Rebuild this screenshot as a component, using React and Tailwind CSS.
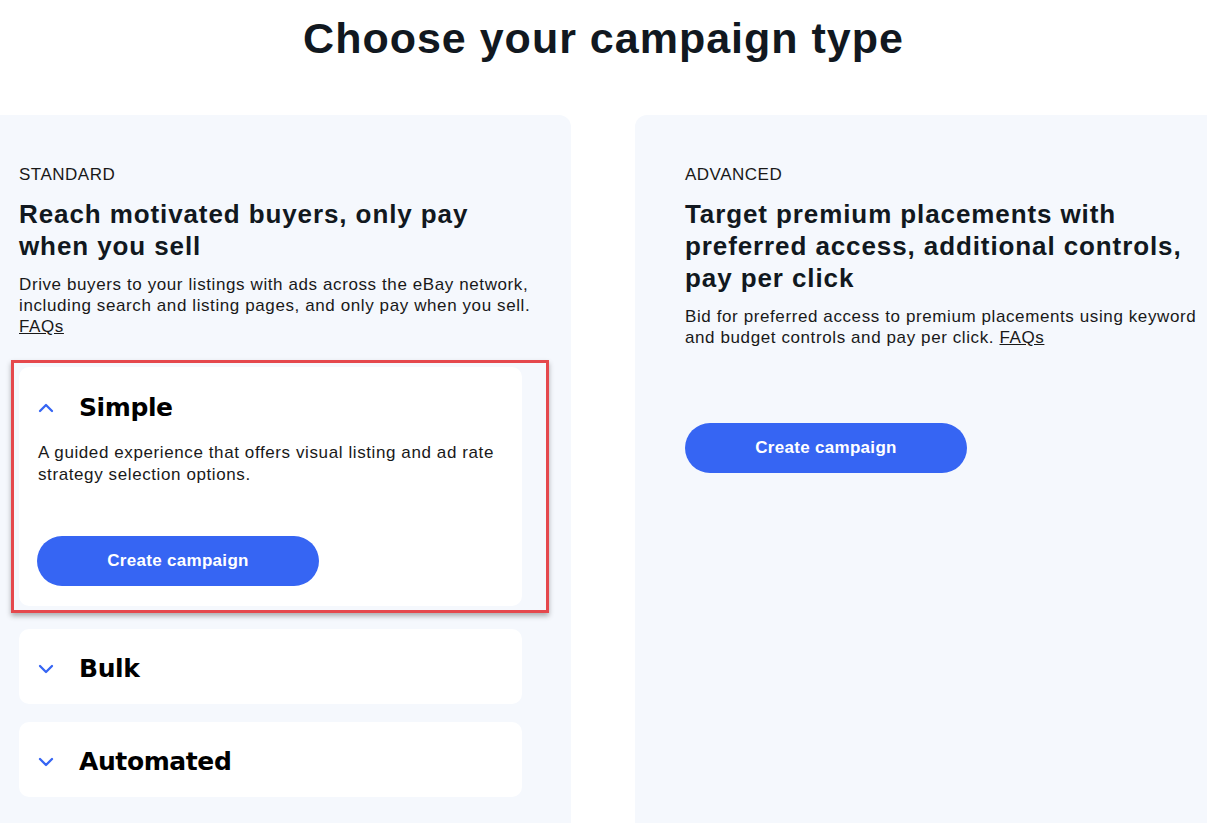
import { useState } from "react";

function Chevron({ up }) {
  return (
    <svg width="16" height="10" viewBox="0 0 16 10" className="shrink-0">
      <polyline
        points={up ? "2,8 8,2 14,8" : "2,2 8,8 14,2"}
        fill="none"
        stroke="#3665f3"
        strokeWidth="2.3"
        strokeLinecap="round"
        strokeLinejoin="round"
      />
    </svg>
  );
}

function CreateButton() {
  return (
    <button className="h-[50px] w-[282px] rounded-full bg-[#3665f3] text-[17px] font-bold tracking-[0.3px] text-white">
      Create campaign
    </button>
  );
}

function Option({ title, open, onToggle, children, highlight }) {
  return (
    <div className={`relative w-[503px] rounded-[10px] bg-white ${open ? "pt-[24px]" : "pt-[23px] pb-[18px]"}`}>
      {highlight && (
        <div className="pointer-events-none absolute -top-[7px] -left-[8px] -right-[27px] -bottom-[7px] border-[3px] border-[#e5484d] shadow-[0_3px_5px_rgba(0,0,0,0.3)]" />
      )}
      <button onClick={onToggle} className="flex h-[34px] w-full items-center text-left">
        <span className="ml-[19px] w-[41px]">
          <Chevron up={open} />
        </span>
        <span className="font-[family-name:'DejaVu_Sans',sans-serif] text-[25px] font-bold tracking-[-0.4px] text-black">
          {title}
        </span>
      </button>
      {open && children}
    </div>
  );
}

export default function App() {
  const [open, setOpen] = useState("simple");
  const toggle = (key) => setOpen(open === key ? "" : key);

  return (
    <div className="h-[823px] w-full overflow-hidden bg-white pt-[13px] font-[family-name:'Liberation_Sans',Arial,sans-serif] text-[#191919]">
      <h1 className="text-center text-[43px] leading-[50px] font-bold tracking-[1px] text-[#111820]">
        Choose your campaign type
      </h1>

      <div className="mt-[52px] flex gap-[64px]">
        <div className="h-[720px] w-[571px] shrink-0 rounded-r-xl bg-[#f5f8fd] pt-[50px] pr-[32px] pl-[19px]">
          <div className="text-[17px] leading-[20px] tracking-[0.5px]">STANDARD</div>
          <h2 className="mt-[13px] text-[26px] leading-[32px] font-bold tracking-[0.9px] text-[#111820]">
            Reach motivated buyers, only pay when you sell
          </h2>
          <p className="mt-[12px] text-[17px] leading-[21px] tracking-[0.6px]">
            Drive buyers to your listings with ads across the eBay network, including search and listing pages, and
            only pay when you sell.{" "}
            <a href="#" className="underline">
              FAQs
            </a>
          </p>

          <div className="mt-[30px]">
            <Option title="Simple" open={open === "simple"} onToggle={() => toggle("simple")} highlight>
              <div className="px-[19px] pt-[17px] pb-[20px]">
                <p className="text-[17px] leading-[22px] tracking-[0.6px]">
                  A guided experience that offers visual listing and ad rate strategy selection options.
                </p>
                <div className="mt-[50px] -ml-px">
                  <CreateButton />
                </div>
              </div>
            </Option>
          </div>
          <div className="mt-[23px]">
            <Option title="Bulk" open={open === "bulk"} onToggle={() => toggle("bulk")} />
          </div>
          <div className="mt-[18px]">
            <Option title="Automated" open={open === "automated"} onToggle={() => toggle("automated")} />
          </div>
        </div>

        <div className="h-[720px] w-[572px] shrink-0 rounded-l-xl bg-[#f5f8fd] pt-[50px] pl-[50px]">
          <div className="text-[17px] leading-[20px] tracking-[0.5px]">ADVANCED</div>
          <h2 className="mt-[13px] text-[26px] leading-[32px] font-bold tracking-[0.9px] text-[#111820]">
            Target premium placements with preferred access, additional controls, pay per click
          </h2>
          <p className="mt-[12px] text-[17px] leading-[21px] tracking-[0.6px]">
            Bid for preferred access to premium placements using keyword and budget controls and pay per click.{" "}
            <a href="#" className="underline">
              FAQs
            </a>
          </p>
          <div className="mt-[75px]">
            <CreateButton />
          </div>
        </div>
      </div>
    </div>
  );
}
